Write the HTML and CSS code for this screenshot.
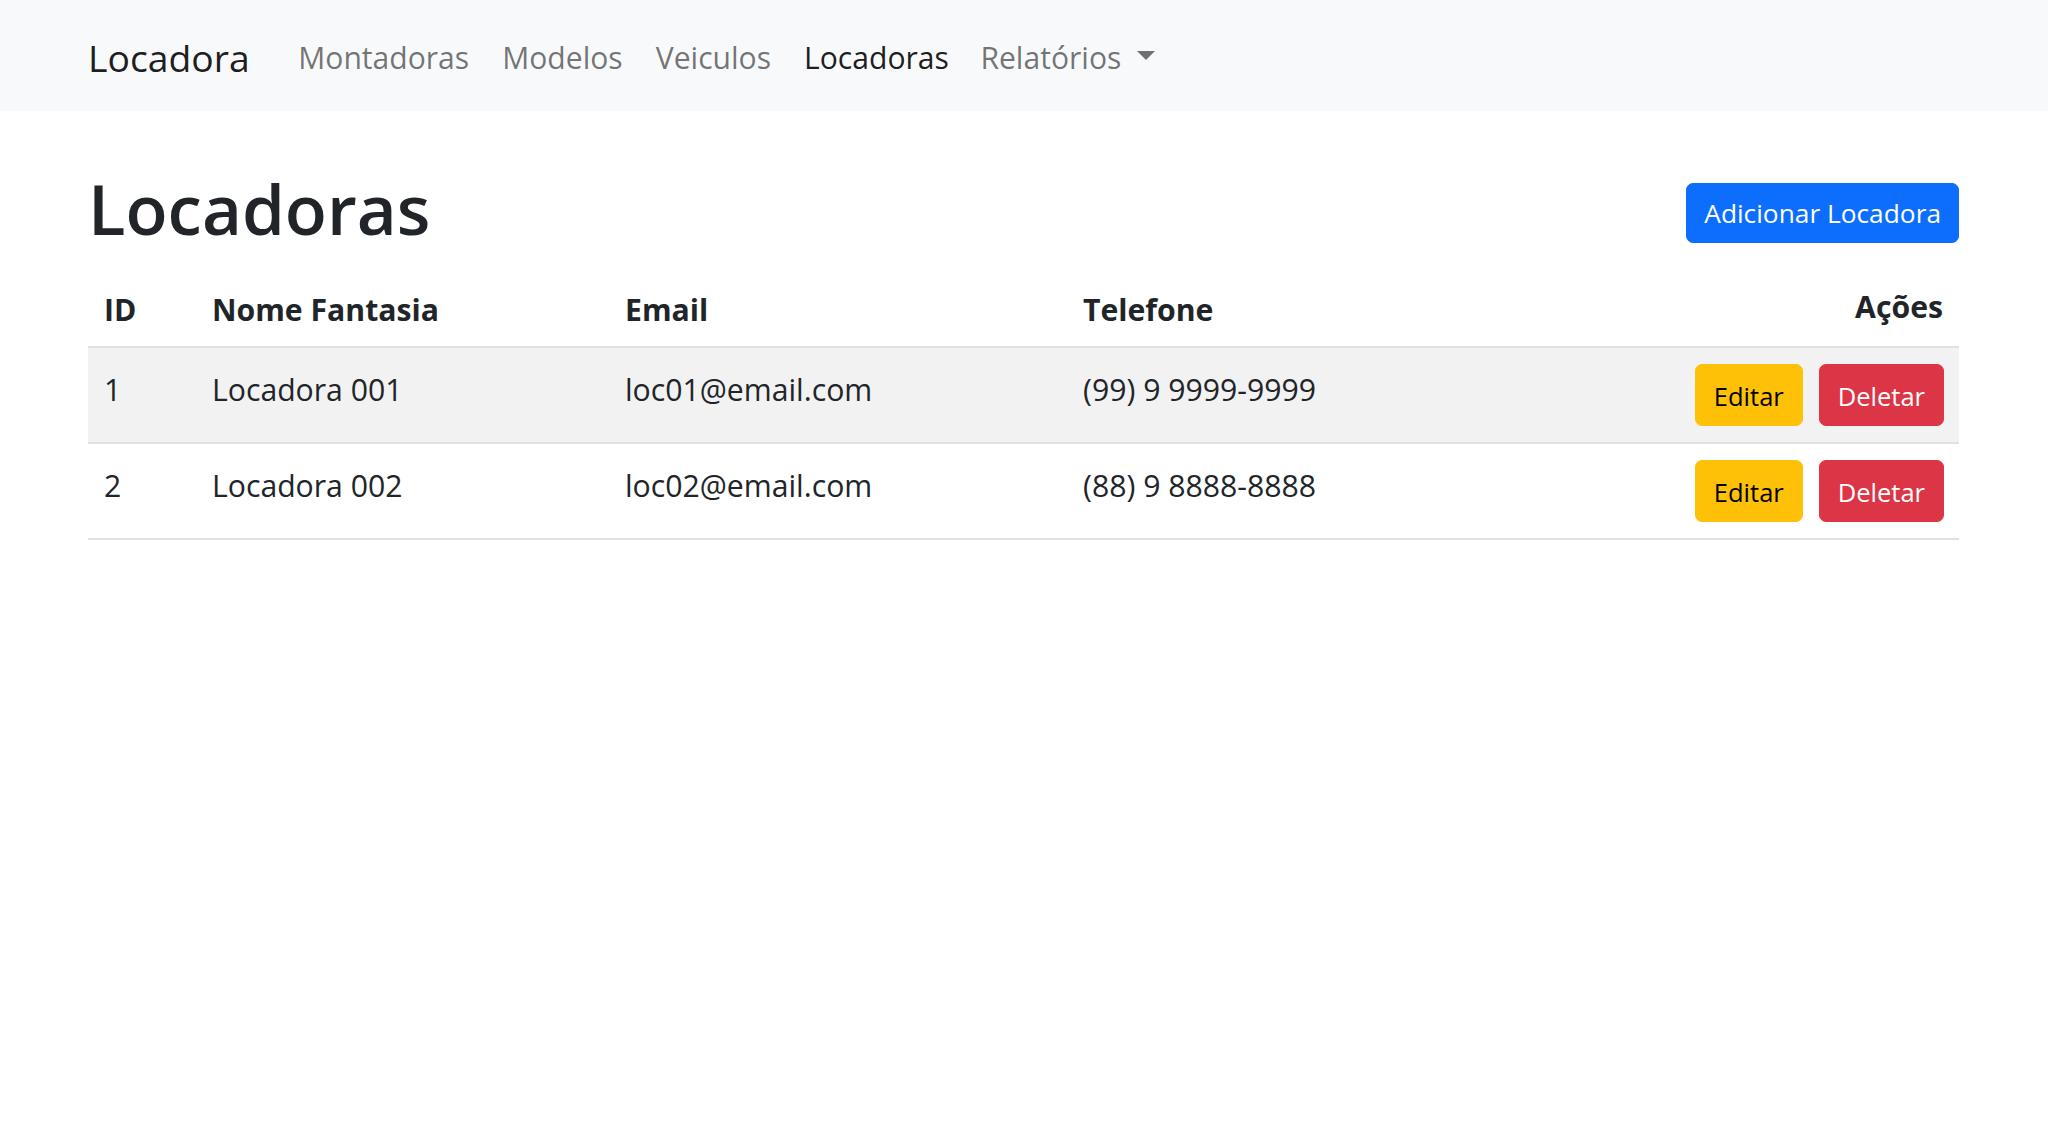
FILE: index.html
```html
<!DOCTYPE html>
<html lang="pt-BR">
<head>
<meta charset="utf-8">
<title>Locadoras</title>
<link rel="stylesheet" href="styles.css">
</head>
<body>
<nav class="navbar">
  <div class="nav-inner">
    <a class="brand" href="#">Locadora</a>
    <ul class="nav-links">
      <li><a class="nav-link" href="#">Montadoras</a></li>
      <li><a class="nav-link" href="#">Modelos</a></li>
      <li><a class="nav-link" href="#">Veiculos</a></li>
      <li><a class="nav-link active" href="#">Locadoras</a></li>
      <li><a class="nav-link dropdown" href="#">Relatórios<span class="caret"></span></a></li>
    </ul>
  </div>
</nav>
<main class="container">
  <div class="page-head">
    <h1 class="title">Locadoras</h1>
    <a class="btn btn-primary btn-add" href="#">Adicionar Locadora</a>
  </div>
  <table class="table">
    <colgroup>
      <col class="c-id">
      <col class="c-nome">
      <col class="c-email">
      <col class="c-tel">
      <col class="c-acoes">
    </colgroup>
    <thead>
      <tr>
        <th>ID</th>
        <th>Nome Fantasia</th>
        <th>Email</th>
        <th>Telefone</th>
        <th class="right">Ações</th>
      </tr>
    </thead>
    <tbody>
      <tr class="striped">
        <td>1</td>
        <td>Locadora 001</td>
        <td>loc01@email.com</td>
        <td>(99) 9 9999-9999</td>
        <td class="actions"><div class="btn-row"><a class="btn btn-warning" href="#">Editar</a><a class="btn btn-danger" href="#">Deletar</a></div></td>
      </tr>
      <tr>
        <td>2</td>
        <td>Locadora 002</td>
        <td>loc02@email.com</td>
        <td>(88) 9 8888-8888</td>
        <td class="actions"><div class="btn-row"><a class="btn btn-warning" href="#">Editar</a><a class="btn btn-danger" href="#">Deletar</a></div></td>
      </tr>
    </tbody>
  </table>
</main>
</body>
</html>
```

FILE: styles.css
```css
* { box-sizing: border-box; }

html, body {
  margin: 0;
  padding: 0;
  background: #ffffff;
  color: #212529;
  font-family: "Open Sans", "Noto Sans", sans-serif;
}

a { text-decoration: none; }

.navbar {
  background: #f8f9fa;
  height: 111px;
  padding-top: 5px;
  display: flex;
  align-items: center;
}

.nav-inner {
  display: flex;
  align-items: center;
  padding-left: 88px;
}

.brand {
  font-size: 37.3px;
  line-height: 54px;
  color: rgba(0, 0, 0, 0.9);
  margin-right: 32px;
}

.nav-links {
  display: flex;
  align-items: center;
  list-style: none;
  margin: 0;
  padding: 0;
}

.nav-link {
  display: flex;
  align-items: center;
  font-size: 30.1px;
  line-height: 44px;
  padding: 0 16.5px;
  color: rgba(0, 0, 0, 0.55);
}

.nav-link.active {
  color: rgba(0, 0, 0, 0.9);
}

.nav-link.dropdown {
  padding-left: 15px;
}

.caret {
  display: inline-block;
  width: 0;
  height: 0;
  margin-left: 16px;
  margin-top: -6px;
  border-top: 9.5px solid rgba(0, 0, 0, 0.55);
  border-left: 9.5px solid transparent;
  border-right: 9.5px solid transparent;
}

.container {
  padding: 57px 89px 0 88px;
}

.page-head {
  display: flex;
  justify-content: space-between;
  align-items: flex-start;
}

.title {
  margin: 0;
  font-size: 69px;
  line-height: 81.6px;
  font-weight: 600;
  color: #212529;
}

.btn {
  display: inline-block;
  border: 1px solid transparent;
  border-radius: 7px;
  text-align: center;
  white-space: nowrap;
}

.btn-add {
  margin-top: 15px;
  font-size: 26.3px;
  line-height: 39px;
  padding: 9.5px 17px;
}

.btn-primary {
  background: #0d6efd;
  border-color: #0d6efd;
  color: #ffffff;
}

.btn-warning {
  background: #ffc107;
  border-color: #ffc107;
  color: #000000;
}

.btn-danger {
  background: #dc3545;
  border-color: #dc3545;
  color: #ffffff;
}

.table {
  width: 100%;
  margin-top: 22px;
  border-collapse: collapse;
  table-layout: fixed;
  font-size: 30.2px;
  line-height: 44px;
  color: #212529;
}

.c-id { width: 108px; }
.c-nome { width: 413px; }
.c-email { width: 458px; }
.c-tel { width: 438px; }
.c-acoes { width: 454px; }

.table th {
  text-align: left;
  font-weight: 700;
  padding: 16px 16px 14px;
  border-bottom: 2px solid #dee2e6;
  vertical-align: bottom;
}

.table th.right {
  text-align: right;
  padding: 13px 16px 17px;
}

.table td {
  padding: 20px 16px 0;
  vertical-align: top;
  border-bottom: 2px solid #dee2e6;
  white-space: nowrap;
}

.table tr.striped td {
  background: #f2f2f2;
}

.table td.actions {
  padding: 16px 15px 16px 16px;
}

.btn-row {
  display: flex;
  justify-content: flex-end;
  gap: 16px;
}

.btn-row .btn {
  font-size: 25.5px;
  line-height: 38px;
  padding: 12px 18px 10px;
}
```
